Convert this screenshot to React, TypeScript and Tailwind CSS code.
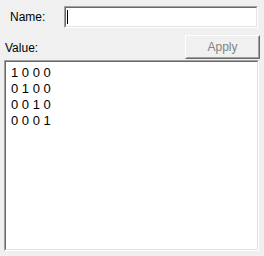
const font = { fontFamily: '"Liberation Sans", Arial, sans-serif' };

const Sunken = ({ className, children }: { className?: string; children?: React.ReactNode }) => (
  <div className={`border border-t-[#a0a0a0] border-l-[#a0a0a0] border-b-white border-r-white ${className ?? ""}`}>
    <div className="h-full w-full border border-t-[#696969] border-l-[#696969] border-b-[#e3e3e3] border-r-[#e3e3e3] bg-white">
      {children}
    </div>
  </div>
);

export default function App() {
  const rows = ["1 0 0 0", "0 1 0 0", "0 0 1 0", "0 0 0 1"];

  return (
    <div
      className="flex h-[256px] w-[264px] flex-col bg-[#f0f0f0] text-[12px] text-black"
      style={font}
    >
      <div className="mt-[6px] flex h-[22px] items-center pr-[6px]">
        <span className="w-[64px] pl-[10px]">Name:</span>
        <Sunken className="h-[22px] flex-1">
          <div className="flex h-full items-center pl-[1px]">
            <div className="h-[14px] w-px bg-black" />
          </div>
        </Sunken>
      </div>

      <div className="mt-[7px] flex h-[24px] items-end pr-[4px]">
        <span className="flex-1 pb-[5px] pl-[5px] leading-none">Value:</span>
        <div className="h-[24px] w-[75px] border border-t-white border-l-white border-b-[#696969] border-r-[#696969]">
          <div className="flex h-full items-center justify-center border border-t-[#f0f0f0] border-l-[#f0f0f0] border-b-[#a0a0a0] border-r-[#a0a0a0] text-[#838383]">
            Apply
          </div>
        </div>
      </div>

      <div className="mt-[1px] flex flex-1 pb-[5px] pl-[4px] pr-[5px]">
        <Sunken className="flex-1">
          <div className="pl-[5px] pt-[3px] text-[13px] leading-[16px]">
            {rows.map((r) => (
              <div key={r} className="whitespace-pre">
                {r}
              </div>
            ))}
          </div>
        </Sunken>
      </div>
    </div>
  );
}
